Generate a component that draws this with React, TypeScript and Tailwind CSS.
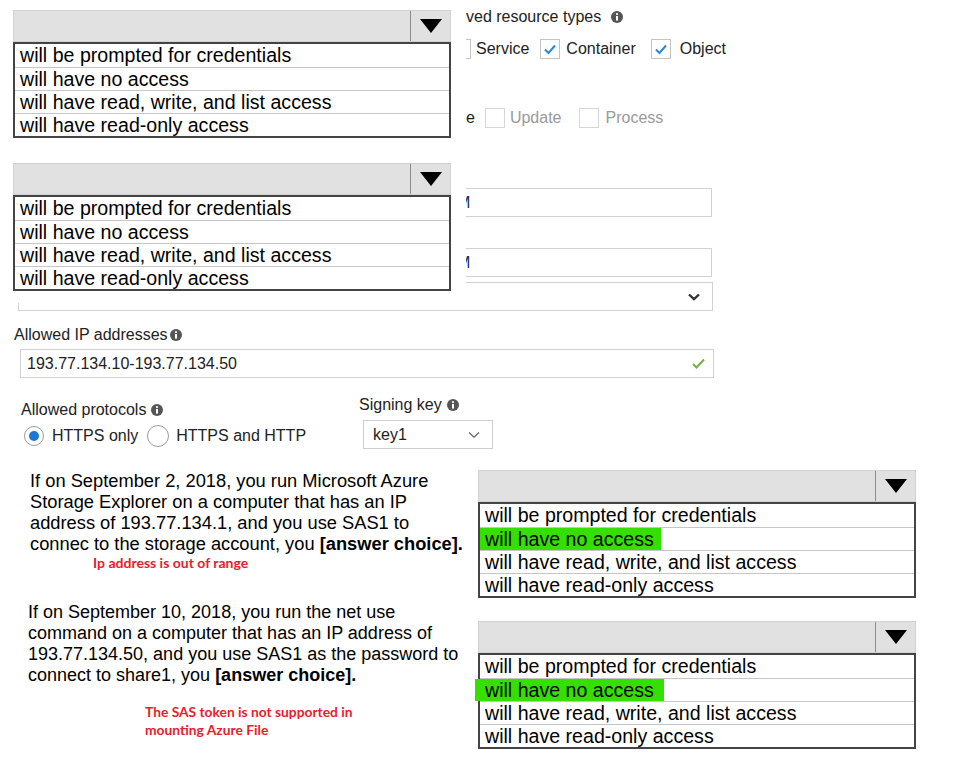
import React from "react";

const items = [
  "will be prompted for credentials",
  "will have no access",
  "will have read, write, and list access",
  "will have read-only access",
];

const Info = () => (
  <svg width="12" height="12" viewBox="0 0 12 12" className="shrink-0">
    <circle cx="6" cy="6" r="6" fill="#555" />
    <rect x="5" y="5" width="2" height="4.6" fill="#fff" />
    <circle cx="6" cy="3.1" r="1.1" fill="#fff" />
  </svg>
);

const Box = ({ checked, light }: { checked?: boolean; light?: boolean }) => (
  <div
    className={`w-[20px] h-[20px] border bg-white flex items-center justify-center shrink-0 ${
      light ? "border-[#d6d6d6]" : "border-[#c4c4c4]"
    }`}
  >
    {checked && (
      <svg width="14" height="12" viewBox="0 0 14 12">
        <path d="M2 6.5 L5.5 10 L12 2.5" fill="none" stroke="#2b88d8" strokeWidth="2" />
      </svg>
    )}
  </div>
);

const Chevron = ({ bold }: { bold?: boolean }) => (
  <svg width="12" height="8" viewBox="0 0 12 8">
    <path
      d="M1 1.5 L6 6.2 L11 1.5"
      fill="none"
      stroke={bold ? "#333" : "#666"}
      strokeWidth={bold ? 2.4 : 1.3}
    />
  </svg>
);

// answer dropdown, opened; hl = which variant of green highlight on row 2
const Dropdown = ({ hl }: { hl?: "a" | "b" }) => (
  <div className="w-[438px] text-[19.6px] text-black">
    <div className="h-[32px] bg-[#e1e1e1] border border-[#d2d2d2] flex justify-end">
      <div className="w-[40px] border-l border-[#8c8c8c] flex items-center justify-center">
        <svg width="22" height="14" viewBox="0 0 22 14">
          <path d="M0 0 H22 L11 14 Z" fill="#000" />
        </svg>
      </div>
    </div>
    <div className="border-2 border-[#444] bg-white">
      {items.map((t, i) => (
        <div
          key={t}
          className={`h-[23px] flex items-center leading-[23px] ${
            i > 0 ? "border-t border-[#c6c6c6]" : ""
          } ${i === 1 && hl ? "" : "pl-[5px]"}`}
        >
          {i === 1 && hl === "a" ? (
            <div className="h-full w-[181px] bg-[#35e000] pl-[5px] flex items-center">{t}</div>
          ) : i === 1 && hl === "b" ? (
            <div className="h-full w-[189px] -ml-[5px] bg-[#35e000] pl-[10px] flex items-center">
              {t}
            </div>
          ) : (
            t
          )}
        </div>
      ))}
    </div>
  </div>
);

export default function App() {
  return (
    <div className="relative w-[973px] h-[769px] overflow-hidden bg-white font-['Liberation_Sans',Arial,sans-serif] text-[#222] text-[16px]">
      {/* form behind the overlays */}
      <div className="pt-[7px]">
        <div className="pl-[466px] flex items-center gap-[10px] h-[20px]">
          <span>ved resource types</span>
          <Info />
        </div>

        <div className="mt-[12px] h-[20px] flex items-center">
          <div className="ml-[451px]">
            <Box />
          </div>
          <span className="ml-[5px]">Service</span>
          <div className="ml-[11px]">
            <Box checked />
          </div>
          <span className="ml-[6px]">Container</span>
          <div className="ml-[15px]">
            <Box checked />
          </div>
          <span className="ml-[9px]">Object</span>
        </div>

        <div className="mt-[49px] h-[20px] flex items-center">
          <span className="ml-[466px]">e</span>
          <div className="ml-[10px]">
            <Box light />
          </div>
          <span className="ml-[5px] text-[#9a9a9a]">Update</span>
          <div className="ml-[17px]">
            <Box light />
          </div>
          <span className="ml-[7px] text-[#9a9a9a]">Process</span>
        </div>

        <div className="mt-[60px] ml-[20px] w-[692px] h-[29px] border border-[#d2d2d2] flex items-center pl-[436px] text-[#1a2a5a]">
          M
        </div>
        <div className="mt-[31px] ml-[20px] w-[692px] h-[29px] border border-[#d2d2d2] flex items-center pl-[436px] text-[#1a2a5a]">
          M
        </div>
        <div className="mt-[5px] ml-[18px] w-[695px] h-[29px] border border-[#d2d2d2] flex items-center justify-end pr-[12px]">
          <Chevron bold />
        </div>

        <div className="mt-[14px] pl-[14px] h-[20px] flex items-center gap-[2px]">
          <span>Allowed IP addresses</span>
          <Info />
        </div>
        <div className="mt-[4px] ml-[20px] w-[694px] h-[29px] border border-[#d2d2d2] flex items-center justify-between pl-[6px] pr-[8px]">
          <span>193.77.134.10-193.77.134.50</span>
          <svg width="13" height="11" viewBox="0 0 13 11">
            <path d="M1 6 L4.5 9.5 L12 1.5" fill="none" stroke="#6cb33f" strokeWidth="2" />
          </svg>
        </div>

        <div className="mt-[17px] pl-[21px] flex">
          <div className="w-[338px] pt-[5px]">
            <div className="h-[20px] flex items-center gap-[5px]">
              <span>Allowed protocols</span>
              <Info />
            </div>
            <div className="mt-[6px] h-[20px] flex items-center">
              <div className="ml-[3px] w-[20px] h-[20px] rounded-full border border-[#9c9c9c] flex items-center justify-center">
                <div className="w-[10px] h-[10px] rounded-full bg-[#1e78d2]" />
              </div>
              <span className="ml-[8px]">HTTPS only</span>
              <div className="ml-[9px] w-[22px] h-[22px] rounded-full border border-[#9c9c9c]" />
              <span className="ml-[7px]">HTTPS and HTTP</span>
            </div>
          </div>
          <div>
            <div className="h-[20px] flex items-center gap-[5px]">
              <span>Signing key</span>
              <Info />
            </div>
            <div className="mt-[5px] ml-[4px] w-[130px] h-[29px] border border-[#cfcfcf] flex items-center justify-between pl-[9px] pr-[12px]">
              <span>key1</span>
              <Chevron />
            </div>
          </div>
        </div>

        <div className="mt-[21px] flex">
          <div className="ml-[30px] w-[448px] text-black">
            <p className="text-[18.3px] leading-[21px]">
              If on September 2, 2018, you run Microsoft Azure
              <br />
              Storage Explorer on a computer that has an IP
              <br />
              address of 193.77.134.1, and you use SAS1 to
              <br />
              connec to the storage account, you <b>[answer choice].</b>
            </p>
            <p className="mt-[1px] pl-[63px] font-['Lato',sans-serif] font-bold text-[14px] leading-[16px] text-[#e8202a]">
              Ip address is out of range
            </p>
          </div>
          <Dropdown hl="a" />
        </div>

        <div className="mt-[4px] flex">
          <div className="ml-[28px] w-[450px] text-black">
            <p className="text-[18px] leading-[21px]">
              If on September 10, 2018, you run the net use
              <br />
              command on a computer that has an IP address of
              <br />
              193.77.134.50, and you use SAS1 as the password to
              <br />
              connect to share1, you <b>[answer choice].</b>
            </p>
            <p className="mt-[17px] pl-[117px] font-['Lato',sans-serif] font-bold text-[13.8px] leading-[18px] text-[#e8202a]">
              The SAS token is not supported in
              <br />
              mounting Azure File
            </p>
          </div>
          <div className="mt-[19px]">
            <Dropdown hl="b" />
          </div>
        </div>
      </div>

      {/* pasted dropdowns covering the form */}
      <div className="absolute left-0 top-0 w-[466px] h-[146px] bg-white pl-[13px] pt-[10px]">
        <Dropdown />
      </div>
      <div className="absolute left-0 top-[150px] w-[466px] h-[153px] bg-white pl-[13px] pt-[13px]">
        <Dropdown />
      </div>
    </div>
  );
}
